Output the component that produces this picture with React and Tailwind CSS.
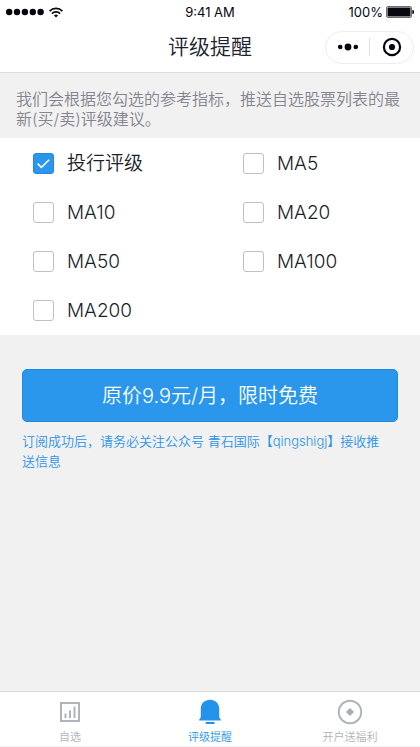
import { useState } from "react";

const OPTIONS = ["投行评级", "MA5", "MA10", "MA20", "MA50", "MA100", "MA200"];

function StatusBar() {
  return (
    <div className="grid h-6 grid-cols-3 items-center px-[6px] text-[13px] leading-4 font-normal text-[#06070f]">
      <div className="flex items-center gap-[5px]">
        <svg width="38" height="8" viewBox="0 0 38 8" fill="currentColor" aria-hidden="true">
          <circle cx="3.2" cy="4" r="3.2" />
          <circle cx="11" cy="4" r="3.2" />
          <circle cx="18.9" cy="4" r="3.2" />
          <circle cx="26.8" cy="4" r="3.2" />
          <circle cx="34.6" cy="4" r="3.2" />
        </svg>
        <svg width="14" height="11" viewBox="0 0 14 11" fill="none" stroke="currentColor" strokeWidth="1.7" aria-hidden="true">
          <path d="M0.6 4.1a9 9 0 0 1 12.8 0" />
          <path d="M2.9 6.6a5.8 5.8 0 0 1 8.2 0" />
          <path d="M7 10.6 5 8.6a2.8 2.8 0 0 1 4 0z" fill="currentColor" stroke="none" />
        </svg>
      </div>
      <div className="text-center">9:41 AM</div>
      <div className="flex items-center justify-end gap-[3px]">
        <span>100%</span>
        <svg width="28" height="12" viewBox="0 0 28 12" aria-hidden="true">
          <rect x="0.5" y="0.5" width="25" height="11" rx="1.5" fill="#fff" stroke="#6d6e75" />
          <rect x="1.5" y="1.5" width="23" height="9" rx="0.5" fill="#06070f" />
          <path d="M26.3 4v4a2 2 0 0 0 0-4z" fill="#06070f" />
        </svg>
      </div>
    </div>
  );
}

function Header() {
  return (
    <header className="grid h-[49px] grid-cols-[1fr_auto_1fr] items-center border-b border-[#dedede] px-[6px] pb-[2px]">
      <span />
      <h1 className="text-[21px] leading-7 text-[#20232f]">评级提醒</h1>
      <div className="flex h-[33px] w-[89px] items-center justify-self-end rounded-full border border-[#ededed]">
        <button type="button" aria-label="更多" className="flex flex-1 justify-center">
          <svg width="20" height="8" viewBox="0 0 20 8" fill="#06070f">
            <circle cx="2.2" cy="4" r="2.3" />
            <circle cx="10" cy="4" r="3.4" />
            <circle cx="17.8" cy="4" r="2.3" />
          </svg>
        </button>
        <span className="h-[18px] w-px bg-[#dfdfdf]" />
        <button type="button" aria-label="关闭" className="flex flex-1 justify-center">
          <svg width="20" height="20" viewBox="0 0 20 20">
            <circle cx="10" cy="10" r="8.1" fill="none" stroke="#06070f" strokeWidth="2.2" />
            <circle cx="10" cy="10" r="3.1" fill="#06070f" />
          </svg>
        </button>
      </div>
    </header>
  );
}

function Option({ label, checked, onChange }) {
  return (
    <label className="flex h-[49px] items-center gap-[13px] pl-[33px] text-[19px] leading-6 text-[#1b1e2b]">
      <span className="grid shrink-0 place-items-center">
        <input
          type="checkbox"
          checked={checked}
          onChange={onChange}
          className="col-start-1 row-start-1 size-[21px] appearance-none rounded-[3px] border border-[#bfc0c7] bg-white checked:border-[#2288e0] checked:bg-[#2b97ec]"
        />
        {checked && (
          <svg width="13" height="10" viewBox="0 0 13 10" fill="none" stroke="#fff" strokeWidth="1.5" className="pointer-events-none col-start-1 row-start-1" aria-hidden="true">
            <path d="M0.6 4.6 4.4 8.4 12.2 0.7" />
          </svg>
        )}
      </span>
      {label}
    </label>
  );
}

function ChartIcon() {
  return (
    <svg width="26" height="26" viewBox="0 0 26 26" fill="none" stroke="#b1b3bb" strokeWidth="2" aria-hidden="true">
      <rect x="4" y="4" width="18" height="18" />
      <path d="M8.5 19v-4.5M13 19v-7.5M17.5 19v-11.5" />
    </svg>
  );
}

function BellIcon() {
  return (
    <svg width="26" height="26" viewBox="0 0 26 26" fill="#2491ea" aria-hidden="true">
      <path d="M2.2 21.4v-1c1.2-.7 1.6-1.6 1.6-3.6V9.8C3.8 4.6 7.7.8 13 .8s9.2 3.8 9.2 9v7c0 2 .4 2.9 1.6 3.6v1z" />
      <rect x="8.7" y="22.9" width="8.8" height="2.1" />
    </svg>
  );
}

function CoinIcon() {
  return (
    <svg width="26" height="26" viewBox="0 0 26 26" aria-hidden="true">
      <circle cx="13" cy="13" r="11.3" fill="none" stroke="#b1b3bb" strokeWidth="1.9" />
      <path d="M13 9.5 16.5 13 13 16.5 9.5 13z" fill="#a9abb4" stroke="#a9abb4" strokeWidth="1" strokeLinejoin="round" />
    </svg>
  );
}

const TABS = [
  { label: "自选", Icon: ChartIcon },
  { label: "评级提醒", Icon: BellIcon, active: true },
  { label: "开户送福利", Icon: CoinIcon },
];

export default function App() {
  const [selected, setSelected] = useState(["投行评级"]);
  const toggle = (name) =>
    setSelected((list) => (list.includes(name) ? list.filter((n) => n !== name) : [...list, name]));

  return (
    <div className="flex min-h-screen flex-col bg-white font-['Inter','Noto_Sans_CJK_SC',sans-serif] font-[350]">
      <StatusBar />
      <Header />
      <main className="flex-1 bg-[#f1f1f1]">
        <p className="px-4 pt-4 pb-[9px] text-[16px] leading-5 text-[#83858f]">
          我们会根据您勾选的参考指标，推送自选股票列表的最新(买/卖)评级建议。
        </p>
        <div className="grid grid-cols-2 bg-white pt-px">
          {OPTIONS.map((name) => (
            <Option key={name} label={name} checked={selected.includes(name)} onChange={() => toggle(name)} />
          ))}
        </div>
        <div className="px-[22px] pt-[34px]">
          <button type="button" className="h-[53px] w-full rounded-[5px] border border-[#1f88df] bg-[#2b97ec] text-xl text-white">
            原价9.9元/月，限时免费
          </button>
          <p className="pt-[9px] pr-3 text-[13px] leading-5 text-[#2b94e8]">
            订阅成功后，请务必关注公众号 青石国际【qingshigj】接收推送信息
          </p>
        </div>
      </main>
      <nav className="grid h-14 grid-cols-3 border-y border-t-[#d9d9d9] border-b-[#f1f1f1]">
        {TABS.map(({ label, Icon, active }) => (
          <a
            key={label}
            href="#"
            aria-current={active ? "page" : undefined}
            className={`flex flex-col items-center gap-1 pt-[7px] text-[11px] leading-4 ${active ? "text-[#2b94e8]" : "text-[#b1b3bb]"}`}
          >
            <Icon />
            {label}
          </a>
        ))}
      </nav>
    </div>
  );
}
